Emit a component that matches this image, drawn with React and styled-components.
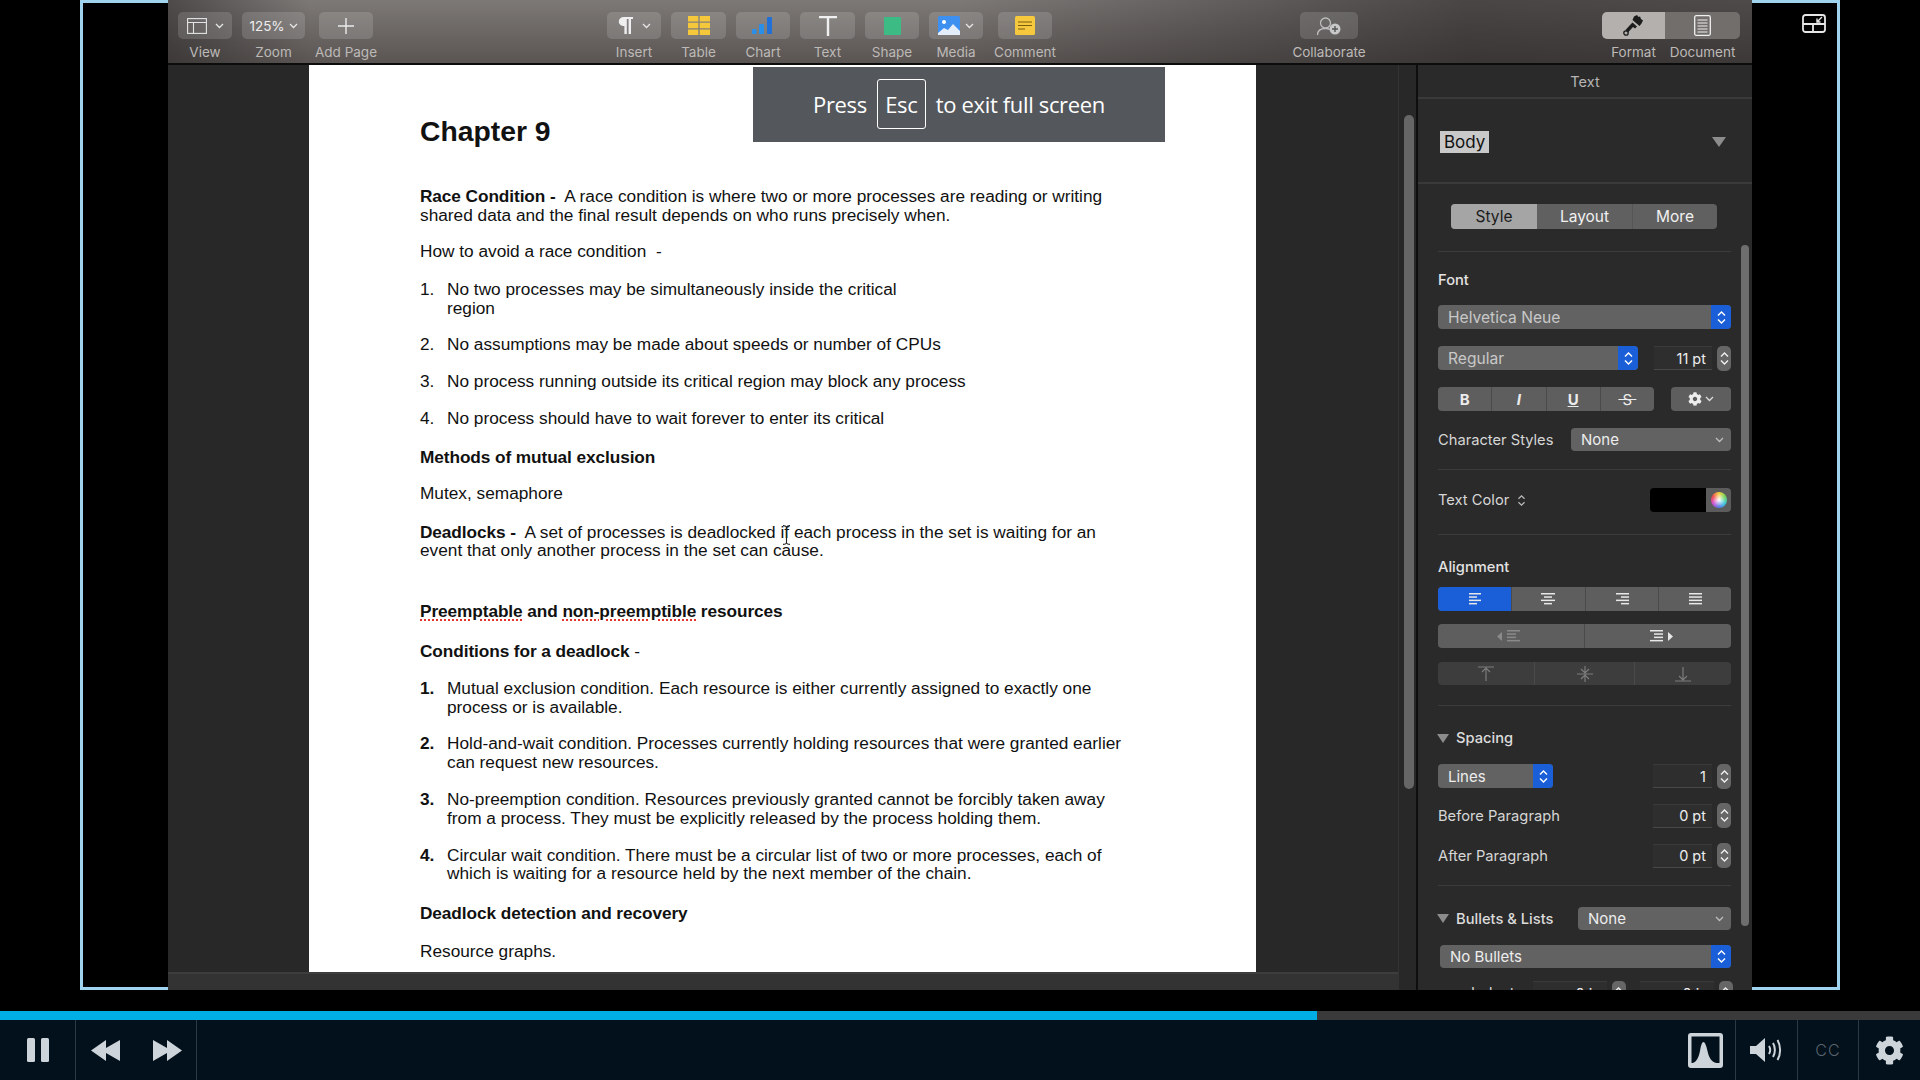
import styled, { createGlobalStyle } from "styled-components";
import { FaCog } from "react-icons/fa";

const uiFont = `"Inter", "Liberation Sans", sans-serif`;

const GlobalStyle = createGlobalStyle`
  html, body {
    margin: 0;
    padding: 0;
    background: #000;
    overflow: hidden;
  }
  * {
    box-sizing: border-box;
  }
`;

const Screen = styled.div`
  width: 1920px;
  height: 1080px;
  display: flex;
  flex-direction: column;
  background: #000;
  overflow: hidden;
  font-family: ${uiFont};
`;

const Stage = styled.div`
  height: 1011px;
  display: flex;
  align-items: flex-start;
  padding-left: 80px;
`;

const Gutter = styled.div`
  width: 88px;
  height: 990px;
  flex: none;
  border-top: 3px solid #9fd3ee;
  border-bottom: 3px solid #9fd3ee;
  ${(p) => (p.$side === "left" ? "border-left: 3px solid #9fd3ee;" : "border-right: 3px solid #9fd3ee;")}
  padding: 11px 0 0 50px;
`;

const Win = styled.div`
  width: 1584px;
  height: 990px;
  flex: none;
  display: flex;
  flex-direction: column;
  overflow: hidden;
  background: #282828;
`;

const Toolbar = styled.div`
  height: 65px;
  flex: none;
  display: flex;
  align-items: flex-start;
  padding: 12px 0 0 10px;
  border-bottom: 2px solid #0c0c0c;
  background:
    linear-gradient(90deg, rgba(30, 28, 28, 0.5) 0, rgba(30, 28, 28, 0) 9%, rgba(30, 28, 28, 0) 50%, rgba(30, 28, 28, 0.55) 82%, rgba(30, 28, 28, 0.5) 100%),
    linear-gradient(180deg, #7d7977, #5a5553);
`;

const ToolWrap = styled.div`
  width: ${(p) => p.$width}px;
  margin-left: ${(p) => p.$left}px;
  flex: none;
  display: flex;
  flex-direction: column;
  align-items: center;
`;

const ToolButton = styled.div`
  width: 100%;
  height: 27px;
  display: flex;
  align-items: center;
  justify-content: center;
  gap: ${(p) => p.$gap}px;
  border-radius: 5px;
  background: rgba(255, 255, 255, 0.14);
`;

const ToolLabel = styled.div`
  margin-top: 5px;
  font-size: 13.5px;
  line-height: 16px;
  color: #bdb9b7;
  white-space: nowrap;
`;

const ZoomValue = styled.span`
  font-size: 13.5px;
  color: #eee;
`;

const ShapeSwatch = styled.div`
  width: 17px;
  height: 18px;
  border-radius: 1px;
  background: #3dbb85;
`;

const SegmentGroup = styled.div`
  margin-left: 244px;
  display: flex;
`;

const SegmentButton = styled.div`
  width: 100%;
  height: 27px;
  display: flex;
  align-items: center;
  justify-content: center;
  background: ${(p) => (p.$active ? "#b3b0ae" : "#716e6c")};
  border-radius: ${(p) => (p.$active ? "5px 0 0 5px" : "0 5px 5px 0")};
`;

const WinBody = styled.div`
  flex: 1;
  min-height: 0;
  display: flex;
`;

const Canvas = styled.div`
  position: relative;
  width: 1250px;
  flex: none;
  display: flex;
  border-right: 2px solid #0e0e0e;
`;

const CanvasMain = styled.div`
  width: 1230px;
  flex: none;
  display: flex;
  flex-direction: column;
`;

const CanvasRow = styled.div`
  height: 907px;
  flex: none;
  padding-left: 141px;
`;

const Page = styled.div`
  position: relative;
  width: 947px;
  height: 100%;
  padding: 50px 0 0 111px;
  background: #fff;
  color: #111;
  font-family: "Liberation Sans", Arial, sans-serif;
  font-size: 17.25px;
  line-height: 18.5px;
  & b {
    letter-spacing: -0.09px;
  }
`;

const ChapterTitle = styled.h1`
  margin: 0 0 40px;
  font-size: 28.3px;
  line-height: 32px;
  font-weight: 700;
`;

const Para = styled.div`
  margin-top: ${(p) => p.$gap}px;
  display: ${(p) => (p.$numbered ? "grid" : "block")};
  grid-template-columns: 27px 1fr;
  & > span {
    font-weight: ${(p) => (p.$bold ? 700 : 400)};
  }
`;

const ParaNum = styled.span``;

const ParaLine = styled.div`
  white-space: pre;
`;

const Squiggle = styled.span`
  text-decoration: underline dotted #e2352d 2px;
  text-underline-offset: 3px;
`;

const IBeam = styled.svg`
  position: absolute;
  left: 473px;
  top: 460px;
`;

const CanvasScroll = styled.div`
  width: 18px;
  flex: none;
  padding: 50px 0 0 5px;
  border-left: 1px solid #333;
`;

const CanvasThumb = styled.div`
  width: 10px;
  height: 674px;
  border-radius: 5px;
  background: #666;
`;

const StatusStrip = styled.div`
  flex: 1;
  background: #333;
  border-top: 2px solid #3d3d3d;
`;

const EscBanner = styled.div`
  position: absolute;
  left: 585px;
  top: 2px;
  width: 412px;
  height: 75px;
  display: flex;
  align-items: center;
  padding: 0 0 2px 60px;
  gap: 10px;
  background: #54575c;
  color: #fff;
  font-family: "Open Sans", sans-serif;
  font-size: 22px;
  letter-spacing: -0.35px;
`;

const EscKey = styled.span`
  width: 49px;
  height: 50px;
  display: flex;
  align-items: center;
  justify-content: center;
  border: 1.5px solid #fff;
  border-radius: 3px;
`;

const Inspector = styled.div`
  position: relative;
  flex: 1;
  background: #2a2a2a;
  overflow: hidden;
  color: #d6d6d6;
  font-size: 14.7px;
`;

const InspectorTitle = styled.div`
  height: 34px;
  display: flex;
  align-items: center;
  justify-content: center;
  border-bottom: 2px solid #3a3a3a;
  color: #b5b5b5;
  font-size: 14.5px;
`;

const StyleRow = styled.div`
  height: 85px;
  display: flex;
  align-items: center;
  justify-content: space-between;
  padding: 2px 26px 0 22px;
  border-bottom: 2px solid #3a3a3a;
`;

const BodyTag = styled.span`
  padding: 0 4px;
  height: 22px;
  line-height: 22px;
  background: #c9c9c9;
  color: #111;
  font-size: 17px;
`;

const DiscloseDown = styled.span`
  width: 0;
  height: 0;
  border-left: ${(p) => p.$size}px solid transparent;
  border-right: ${(p) => p.$size}px solid transparent;
  border-top: ${(p) => p.$size * 1.5}px solid #8c8c8c;
  flex: none;
`;

const InspectorPad = styled.div`
  padding: 0 21px 0 20px;
`;

const Tabs = styled.div`
  margin: 20px 0 0 13px;
  height: 25px;
  width: 266px;
  display: flex;
  border-radius: 4px;
  overflow: hidden;
  background: #606060;
`;

const Tab = styled.div`
  width: ${(p) => p.$width}px;
  display: flex;
  align-items: center;
  justify-content: center;
  font-size: 15.5px;
  background: ${(p) => (p.$active ? "#a5a5a5" : "transparent")};
  color: ${(p) => (p.$active ? "#1b1b1b" : "#f0f0f0")};
  ${(p) => p.$divider && "border-left: 1px solid #555;"}
`;

const Rule = styled.div`
  height: 1px;
  margin-top: ${(p) => p.$top}px;
  background: #3c3c3c;
`;

const Label = styled.div`
  margin-top: ${(p) => p.$top || 0}px;
  height: 16px;
  display: flex;
  align-items: center;
  gap: 8px;
  font-size: 14.7px;
  line-height: 16px;
  white-space: nowrap;
  & > strong {
    font-weight: 500;
    color: #e2e2e2;
  }
`;

const Row = styled.div`
  margin-top: ${(p) => p.$top}px;
  height: ${(p) => p.$height || 24}px;
  display: flex;
  align-items: center;
  justify-content: space-between;
  gap: ${(p) => p.$gap || 0}px;
  ${(p) => p.$inset && "padding-left: 2px;"}
`;

const PopupBox = styled.div`
  width: ${(p) => p.$width}px;
  height: 100%;
  max-height: 24px;
  flex: none;
  display: flex;
  align-items: stretch;
  justify-content: space-between;
  border-radius: 4px;
  overflow: hidden;
  background: #626262;
`;

const PopupLabel = styled.span`
  padding-left: 10px;
  align-self: center;
  font-size: ${(p) => (p.$dim ? 15.6 : 15)}px;
  color: ${(p) => (p.$dim ? "#c8c8c8" : "#ededed")};
  white-space: nowrap;
`;

const BlueCap = styled.span`
  width: 20px;
  display: flex;
  align-items: center;
  justify-content: center;
  background: #1a5fd8;
`;

const PlainCap = styled.span`
  width: 24px;
  display: flex;
  align-items: center;
  justify-content: center;
`;

const FieldGroup = styled.div`
  display: flex;
  align-items: center;
  gap: 5px;
  flex: none;
`;

const NumberBox = styled.div`
  width: ${(p) => p.$width}px;
  height: 24px;
  display: flex;
  align-items: center;
  justify-content: flex-end;
  padding-right: 6px;
  background: #2e2e2e;
  border-top: 1px solid #3a3a3a;
  border-bottom: 1px solid #484848;
  color: #eee;
  font-size: 14.5px;
  white-space: nowrap;
`;

const StepperBox = styled.div`
  width: 14px;
  height: 25px;
  display: flex;
  align-items: center;
  justify-content: center;
  border-radius: 5px;
  background: #666;
`;

const ButtonGroup = styled.div`
  width: ${(p) => p.$width}px;
  height: 100%;
  flex: none;
  display: flex;
  border-radius: 4px;
  overflow: hidden;
  background: ${(p) => (p.$dim ? "#3d3d3d" : "#5e5e5e")};
`;

const GroupCell = styled.div`
  flex: ${(p) => p.$w} 1 0;
  display: flex;
  align-items: center;
  justify-content: center;
  gap: 3px;
  font-size: 15px;
  color: #ececec;
  background: ${(p) => (p.$blue ? "#1a5fd8" : "transparent")};
  & + & {
    border-left: 1px solid #4a4a4a;
  }
`;

const StrikeGlyph = styled.s`
  font-weight: 400;
`;

const ColorWell = styled.div`
  width: 81px;
  height: 24px;
  display: flex;
  border-radius: 4px;
  overflow: hidden;
`;

const ColorBlack = styled.div`
  width: 56px;
  background: #000;
`;

const ColorWheelCell = styled.div`
  flex: 1;
  display: flex;
  align-items: center;
  justify-content: center;
  background: #5c5c5c;
`;

const ColorWheel = styled.div`
  width: 16px;
  height: 16px;
  border-radius: 50%;
  background: radial-gradient(circle, #fff 0, rgba(255, 255, 255, 0) 60%),
    conic-gradient(#f2d03c, #6fd35a, #38c7d8, #5a7de8, #d04fd0, #ee4b4b, #f2d03c);
`;

const Disclosure = styled.div`
  margin-top: ${(p) => p.$top || 0}px;
  height: 16px;
  display: flex;
  align-items: center;
  gap: 7px;
  margin-left: -1px;
  & > strong {
    font-weight: 500;
    color: #dcdcdc;
    font-size: 14.7px;
    white-space: nowrap;
  }
`;

const IndentLabel = styled.span`
  margin: 0 auto 0 33px;
  font-size: 14.7px;
`;

const InspectorThumb = styled.div`
  position: absolute;
  left: 323px;
  top: 180px;
  width: 8px;
  height: 681px;
  border-radius: 4px;
  background: #6e6e6e;
`;

const Progress = styled.div`
  height: 9px;
  flex: none;
  background: #3a3a3a;
`;

const ProgressFill = styled.div`
  height: 100%;
  background: #00aee6;
`;

const Controls = styled.div`
  height: 60px;
  flex: none;
  display: flex;
  background: #03111c;
`;

const ControlCell = styled.div`
  width: ${(p) => p.$width}px;
  flex: none;
  display: flex;
  align-items: center;
  justify-content: center;
  gap: ${(p) => p.$gap || 0}px;
  ${(p) => !p.$last && "border-right: 1px solid #2c3944;"}
`;

const ControlSpacer = styled.div`
  flex: 1;
  display: flex;
  align-items: center;
  justify-content: flex-end;
  padding-right: 12px;
  border-right: 1px solid #2c3944;
`;

const CcText = styled.span`
  font-size: 16px;
  font-weight: 300;
  letter-spacing: 1px;
  color: #59646d;
`;

const doc = [
  { gap: 0, lines: [<><b>Race Condition -</b>  A race condition is where two or more processes are reading or writing</>, "shared data and the final result depends on who runs precisely when."] },
  { gap: 18, lines: ["How to avoid a race condition  -"] },
  { gap: 19.5, num: "1.", lines: ["No two processes may be simultaneously inside the critical", "region"] },
  { gap: 18, num: "2.", lines: ["No assumptions may be made about speeds or number of CPUs"] },
  { gap: 18.5, num: "3.", lines: ["No process running outside its critical region may block any process"] },
  { gap: 18.5, num: "4.", lines: ["No process should have to wait forever to enter its critical"] },
  { gap: 20, lines: [<b>Methods of mutual exclusion</b>] },
  { gap: 18, lines: ["Mutex, semaphore"] },
  { gap: 20, lines: [<><b>Deadlocks -</b>  A set of processes is deadlocked if each process in the set is waiting for an</>, "event that only another process in the set can cause."] },
  { gap: 42, lines: [<b><Squiggle>Preemptable</Squiggle> and <Squiggle>non-preemptible</Squiggle> resources</b>] },
  { gap: 22, lines: [<><b>Conditions for a deadlock</b> -</>] },
  { gap: 18.5, num: "1.", bold: true, lines: ["Mutual exclusion condition. Each resource is either currently assigned to exactly one", "process or is available."] },
  { gap: 18, num: "2.", bold: true, lines: ["Hold-and-wait condition. Processes currently holding resources that were granted earlier", "can request new resources."] },
  { gap: 19, num: "3.", bold: true, lines: ["No-preemption condition. Resources previously granted cannot be forcibly taken away", "from a process. They must be explicitly released by the process holding them."] },
  { gap: 18.5, num: "4.", bold: true, lines: ["Circular wait condition. There must be a circular list of two or more processes, each of", "which is waiting for a resource held by the next member of the chain."] },
  { gap: 21, lines: [<b>Deadlock detection and recovery</b>] },
  { gap: 19.5, lines: ["Resource graphs."] },
];

function Chevron({ color = "#e6e6e6" }) {
  return (
    <svg width="9" height="6" viewBox="0 0 9 6">
      <path d="M1 1l3.5 3.5L8 1" fill="none" stroke={color} strokeWidth="1.3" />
    </svg>
  );
}

function UpDown({ color = "#fff", size = 15 }) {
  return (
    <svg width="9" height={size} viewBox="0 0 9 15">
      <path d="M1 5.5l3.5-3.5L8 5.5M1 9.5l3.5 3.5L8 9.5" fill="none" stroke={color} strokeWidth="1.4" />
    </svg>
  );
}

function LinesIcon({ rows, color = "#e8e8e8" }) {
  return (
    <svg width="20" height="13" viewBox="0 0 20 13">
      {rows.map(([x, w], i) => (
        <rect key={i} x={x} y={i * 3.3} width={w} height="1.5" fill={color} />
      ))}
    </svg>
  );
}

function Arrow({ left, color }) {
  return (
    <svg width="6" height="9" viewBox="0 0 6 9">
      <path d={left ? "M5 0v9L0 4.5z" : "M1 0v9l5-4.5z"} fill={color} />
    </svg>
  );
}

function VAlign({ kind }) {
  const c = "#7c7c7c";
  return (
    <svg width="18" height="18" viewBox="0 0 18 18">
      {kind === "top" && <path d="M1 2h16M9 2v14M5 7l4-4 4 4" fill="none" stroke={c} strokeWidth="1.2" />}
      {kind === "mid" && <path d="M1 9h16M9 1v16M5 4l4 4 4-4M5 14l4-4 4 4" fill="none" stroke={c} strokeWidth="1.2" />}
      {kind === "bot" && <path d="M1 16h16M9 2v13M5 11l4 4 4-4" fill="none" stroke={c} strokeWidth="1.2" />}
    </svg>
  );
}

function Stepper() {
  return (
    <StepperBox>
      <UpDown color="#f0f0f0" size={17} />
    </StepperBox>
  );
}

function Popup({ label, width, blue, dim }) {
  return (
    <PopupBox $width={width}>
      <PopupLabel $dim={dim}>{label}</PopupLabel>
      {blue ? (
        <BlueCap>
          <UpDown />
        </BlueCap>
      ) : (
        <PlainCap>
          <Chevron color="#bdbdbd" />
        </PlainCap>
      )}
    </PopupBox>
  );
}

function NumberField({ value, width = 59 }) {
  return (
    <FieldGroup>
      <NumberBox $width={width}>{value}</NumberBox>
      <Stepper />
    </FieldGroup>
  );
}

function ToolItem({ $width, $left, $gap = 8, label, children }) {
  return (
    <ToolWrap $width={$width} $left={$left}>
      <ToolButton $gap={$gap}>{children}</ToolButton>
      <ToolLabel>{label}</ToolLabel>
    </ToolWrap>
  );
}

function Segment({ $active, $width, label, children }) {
  return (
    <ToolWrap $width={$width} $left={0}>
      <SegmentButton $active={$active}>{children}</SegmentButton>
      <ToolLabel>{label}</ToolLabel>
    </ToolWrap>
  );
}

export default function App() {
  return (
    <Screen>
      <GlobalStyle />
      <Stage>
        <Gutter $side="left" />
        <Win>
          <Toolbar>
            <ToolItem $width={54} $left={0} label="View">
              <svg width="20" height="16" viewBox="0 0 20 16">
                <rect x="0.6" y="0.6" width="18.8" height="14.8" fill="none" stroke="#e4e4e4" strokeWidth="1.1" />
                <path d="M1 4.5h18M6.5 4.5v11" stroke="#e4e4e4" strokeWidth="1.1" />
              </svg>
              <Chevron />
            </ToolItem>
            <ToolItem $width={63} $left={10} $gap={4} label="Zoom">
              <ZoomValue>125%</ZoomValue>
              <Chevron />
            </ToolItem>
            <ToolItem $width={54} $left={14} label="Add Page">
              <svg width="18" height="18" viewBox="0 0 18 18">
                <path d="M9 1v16M1 9h16" stroke="#ececec" strokeWidth="1.4" />
              </svg>
            </ToolItem>
            <ToolItem $width={54} $left={234} label="Insert">
              <svg width="16" height="19" viewBox="0 0 16 19">
                <path d="M6 1h9v2h-2v15h-2.4V3H8.8v15H6.4v-8C2.8 10 .8 8.2.8 5.5S2.800 1 6 1z" fill="#efefef" />
              </svg>
              <Chevron />
            </ToolItem>
            <ToolItem $width={55} $left={10} label="Table">
              <svg width="22" height="19" viewBox="0 0 22 19">
                <path d="M0 0h10.300v5.500H0zM11.700 0H22v5.500H11.700zM0 6.800h10.300v5.500H0zM11.700 6.800H22v5.500H11.700zM0 13.600h10.300V19H0zM11.700 13.600H22V19H11.700z" fill="#f5c83c" />
              </svg>
            </ToolItem>
            <ToolItem $width={54} $left={10} label="Chart">
              <svg width="22" height="19" viewBox="0 0 22 19">
                <rect x="0" y="13" width="4.500" height="5" rx="1" fill="#2a8fe8" />
                <rect x="7" y="8" width="5" height="10" rx="1" fill="#2a8fe8" />
                <rect x="15" y="1" width="5" height="17" rx="1" fill="#2070d8" />
              </svg>
            </ToolItem>
            <ToolItem $width={55} $left={10} label="Text">
              <svg width="18" height="20" viewBox="0 0 18 20">
                <path d="M0 0h18v2.200h-7.800V20H7.800V2.200H0z" fill="#f0f0f0" />
              </svg>
            </ToolItem>
            <ToolItem $width={54} $left={10} label="Shape">
              <ShapeSwatch />
            </ToolItem>
            <ToolItem $width={54} $left={10} $gap={5} label="Media">
              <svg width="22" height="19" viewBox="0 0 22 19">
                <rect width="22" height="19" rx="1.500" fill="#3d8ff0" />
                <circle cx="6" cy="6" r="2" fill="#fff" />
                <path d="M0 17l6-5 4 2 5-6 7 7v4H0z" fill="#e4eefb" />
              </svg>
              <Chevron />
            </ToolItem>
            <ToolItem $width={54} $left={15} label="Comment">
              <svg width="20" height="19" viewBox="0 0 20 19">
                <rect width="20" height="19" rx="1.500" fill="#f6c83e" />
                <path d="M3 6h14M3 9.500h14M3 13h7" stroke="#7a5c10" strokeWidth="1.200" />
              </svg>
            </ToolItem>
            <ToolItem $width={58} $left={248} label="Collaborate">
              <svg width="26" height="20" viewBox="0 0 26 20">
                <circle cx="9.500" cy="7" r="5" fill="none" stroke="#bdbdbd" strokeWidth="1.300" />
                <path d="M1.500 19c0-4 3-6.500 8-6.500 2 0 3.500.4 4.500 1" fill="none" stroke="#bdbdbd" strokeWidth="1.300" />
                <circle cx="19" cy="13" r="5.500" fill="#c8c8c8" />
                <path d="M19 10v6M16 13h6" stroke="#555" strokeWidth="1.400" />
              </svg>
            </ToolItem>
            <SegmentGroup>
              <Segment $active $width={63} label="Format">
                <svg width="21" height="21" viewBox="0 0 21 21">
                  <path d="M11 1.500l3-1.500 1.500 2 1.500-.5 1 2.500 2 1.500-1.500 3-2 2.500-7-6z" fill="#1c1c1c" />
                  <path d="M9.500 7.500l4.500 4-2 2-2-1.500-5 5.500-2.500-2.500 5-5.500z" fill="#1c1c1c" />
                  <circle cx="3" cy="18" r="2.200" fill="none" stroke="#1c1c1c" strokeWidth="1.300" />
                </svg>
              </Segment>
              <Segment $width={75} label="Document">
                <svg width="17" height="21" viewBox="0 0 17 21">
                  <rect x="0.700" y="0.700" width="15.600" height="19.600" rx="1.500" fill="none" stroke="#f0f0f0" strokeWidth="1.300" />
                  <path d="M3.500 5h10M3.500 8h10M3.500 11h10M3.500 14h10M3.500 17h10" stroke="#f0f0f0" strokeWidth="1.200" />
                </svg>
              </Segment>
            </SegmentGroup>
          </Toolbar>

          <WinBody>
            <Canvas>
              <CanvasMain>
                <CanvasRow>
                  <Page>
                    <ChapterTitle>Chapter 9</ChapterTitle>
                    {doc.map((p, i) => (
                      <Para key={i} $gap={p.gap} $bold={p.bold} $numbered={!!p.num}>
                        {p.num && <ParaNum>{p.num}</ParaNum>}
                        <div>
                          {p.lines.map((line, j) => (
                            <ParaLine key={j}>{line}</ParaLine>
                          ))}
                        </div>
                      </Para>
                    ))}
                    <IBeam width="9" height="20" viewBox="0 0 9 20">
                      <path d="M1 .6c2 0 3 .6 3.500 1.500C5 1.200 6 .6 8 .6M4.500 2v16M1 19.400c2 0 3-.6 3.500-1.500.5.900 1.500 1.500 3.500 1.500" fill="none" stroke="#222" strokeWidth="1.100" />
                    </IBeam>
                  </Page>
                </CanvasRow>
                <StatusStrip />
              </CanvasMain>
              <CanvasScroll>
                <CanvasThumb />
              </CanvasScroll>
              <EscBanner>
                <span>Press</span>
                <EscKey>Esc</EscKey>
                <span>to exit full screen</span>
              </EscBanner>
            </Canvas>

            <Inspector>
              <InspectorTitle>Text</InspectorTitle>
              <StyleRow>
                <BodyTag>Body</BodyTag>
                <DiscloseDown $size={7} />
              </StyleRow>
              <InspectorPad>
                <Tabs>
                  <Tab $active $width={86}>Style</Tab>
                  <Tab $width={95}>Layout</Tab>
                  <Tab $width={85} $divider>More</Tab>
                </Tabs>
                <Rule $top={22} />
                <Label $top={20}><strong>Font</strong></Label>
                <Row $top={17}>
                  <Popup label="Helvetica Neue" width={293} blue dim />
                </Row>
                <Row $top={17}>
                  <Popup label="Regular" width={200} blue dim />
                  <NumberField value="11 pt" width={58} />
                </Row>
                <Row $top={17}>
                  <ButtonGroup $width={216}>
                    <GroupCell $w={1}><b>B</b></GroupCell>
                    <GroupCell $w={1}><b><i>I</i></b></GroupCell>
                    <GroupCell $w={1}><b><u>U</u></b></GroupCell>
                    <GroupCell $w={1}><StrikeGlyph>{"\u00a0S\u00a0"}</StrikeGlyph></GroupCell>
                  </ButtonGroup>
                  <ButtonGroup $width={60}>
                    <GroupCell $w={1}>
                      <FaCog size={14} color="#eee" />
                      <Chevron color="#ddd" />
                    </GroupCell>
                  </ButtonGroup>
                </Row>
                <Row $top={17} $height={23}>
                  <Label>Character Styles</Label>
                  <Popup label="None" width={160} />
                </Row>
                <Rule $top={18} />
                <Row $top={18}>
                  <Label>
                    Text Color <UpDown color="#bbb" size={13} />
                  </Label>
                  <ColorWell>
                    <ColorBlack />
                    <ColorWheelCell>
                      <ColorWheel />
                    </ColorWheelCell>
                  </ColorWell>
                </Row>
                <Rule $top={22} />
                <Label $top={24}><strong>Alignment</strong></Label>
                <Row $top={12}>
                  <ButtonGroup $width={293}>
                    <GroupCell $w={74} $blue><LinesIcon rows={[[4, 12], [4, 8], [4, 12], [4, 8]]} /></GroupCell>
                    <GroupCell $w={73}><LinesIcon rows={[[3, 14], [6, 8], [3, 14], [6, 8]]} /></GroupCell>
                    <GroupCell $w={73}><LinesIcon rows={[[4, 13], [9, 8], [4, 13], [9, 8]]} /></GroupCell>
                    <GroupCell $w={73}><LinesIcon rows={[[4, 13], [4, 13], [4, 13], [4, 13]]} /></GroupCell>
                  </ButtonGroup>
                </Row>
                <Row $top={13}>
                  <ButtonGroup $width={293}>
                    <GroupCell $w={1}>
                      <Arrow left color="#8a8a8a" />
                      <LinesIcon rows={[[1, 13], [1, 9], [1, 9], [1, 13]]} color="#8a8a8a" />
                    </GroupCell>
                    <GroupCell $w={1}>
                      <LinesIcon rows={[[6, 13], [10, 9], [10, 9], [6, 13]]} />
                      <Arrow color="#e8e8e8" />
                    </GroupCell>
                  </ButtonGroup>
                </Row>
                <Row $top={14} $height={23}>
                  <ButtonGroup $width={293} $dim>
                    <GroupCell $w={97}><VAlign kind="top" /></GroupCell>
                    <GroupCell $w={99}><VAlign kind="mid" /></GroupCell>
                    <GroupCell $w={97}><VAlign kind="bot" /></GroupCell>
                  </ButtonGroup>
                </Row>
                <Rule $top={20} />
                <Disclosure $top={24}>
                  <DiscloseDown $size={6} />
                  <strong>Spacing</strong>
                </Disclosure>
                <Row $top={18}>
                  <Popup label="Lines" width={115} blue />
                  <NumberField value="1" />
                </Row>
                <Row $top={15} $height={25}>
                  <Label>Before Paragraph</Label>
                  <NumberField value="0 pt" />
                </Row>
                <Row $top={15} $height={25}>
                  <Label>After Paragraph</Label>
                  <NumberField value="0 pt" />
                </Row>
                <Rule $top={17} />
                <Row $top={21} $height={23}>
                  <Disclosure>
                    <DiscloseDown $size={6} />
                    <strong>Bullets &amp; Lists</strong>
                  </Disclosure>
                  <Popup label="None" width={153} />
                </Row>
                <Row $top={15} $height={23} $inset>
                  <Popup label="No Bullets" width={291} blue />
                </Row>
                <Row $top={13} $gap={14}>
                  <IndentLabel>Indent:</IndentLabel>
                  <NumberField value="0 in" width={74} />
                  <NumberField value="0 in" width={74} />
                </Row>
              </InspectorPad>
              <InspectorThumb />
            </Inspector>
          </WinBody>
        </Win>
        <Gutter $side="right">
          <svg width="24" height="19" viewBox="0 0 24 19">
            <rect x="1" y="1" width="22" height="17" rx="2.500" fill="none" stroke="#e6e6e6" strokeWidth="1.800" />
            <path d="M1 10h22M11 10v8" stroke="#e6e6e6" strokeWidth="1.800" />
            <path d="M20 3l-5 5M15 4.500V8h3.500" fill="none" stroke="#e6e6e6" strokeWidth="1.400" />
          </svg>
        </Gutter>
      </Stage>

      <Progress>
        <ProgressFill style={{ width: `${(1317 / 1920) * 100}%` }} />
      </Progress>

      <Controls>
        <ControlCell $width={76}>
          <svg width="22" height="24" viewBox="0 0 22 24">
            <rect width="8" height="24" rx="1.500" fill="#cdd4da" />
            <rect x="14" width="8" height="24" rx="1.500" fill="#cdd4da" />
          </svg>
        </ControlCell>
        <ControlCell $width={121} $gap={31}>
          <svg width="30" height="21" viewBox="0 0 30 21">
            <path d="M15 0v8L29 0v21L15 13v8L0 10.500z" fill="#cdd4da" />
          </svg>
          <svg width="30" height="21" viewBox="0 0 30 21">
            <path d="M1 0l14 8V0l15 10.500L15 21v-8L1 21z" fill="#cdd4da" />
          </svg>
        </ControlCell>
        <ControlSpacer>
          <svg width="35" height="35" viewBox="0 0 35 35">
            <path fillRule="evenodd" d="M3 0h29a3 3 0 013 3v29a3 3 0 01-3 3H3a3 3 0 01-3-3V3a3 3 0 013-3zM3.500 3.500V30h1c4-1 6-5 7.500-12 1-6 2-9 3.500-9s3 4 4 9c1.500 7 4 11 9 12h3V3.500z" fill="#cdd4da" />
          </svg>
        </ControlSpacer>
        <ControlCell $width={62}>
          <svg width="33" height="24" viewBox="0 0 33 24">
            <path d="M0 8h6l9-8v24l-9-8H0z" fill="#cdd4da" />
            <path d="M19 8c1.500 2.500 1.500 5.500 0 8M23 5c2.500 4 2.500 10 0 14M27.500 2c3.500 6 3.500 14 0 20" fill="none" stroke="#cdd4da" strokeWidth="2" />
          </svg>
        </ControlCell>
        <ControlCell $width={61}>
          <CcText>CC</CcText>
        </ControlCell>
        <ControlCell $width={61} $last>
          <FaCog size={29} color="#cdd4da" />
        </ControlCell>
      </Controls>
    </Screen>
  );
}
